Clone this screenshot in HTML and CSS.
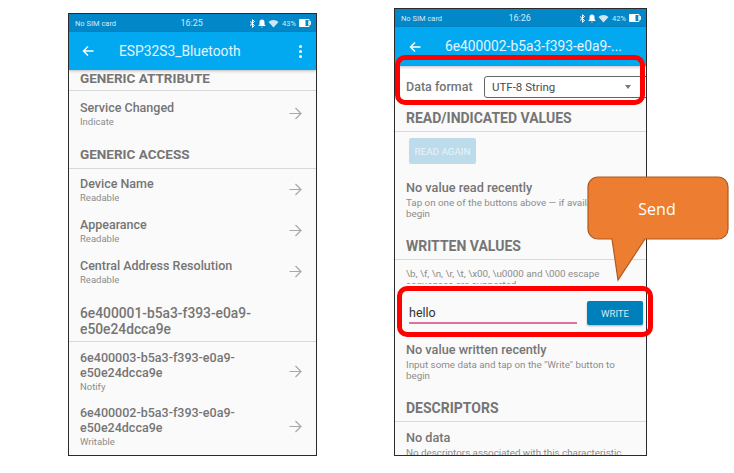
FILE: index.html
```html
<!DOCTYPE html>
<html>
<head>
  <meta charset="UTF-8">
  <title>ESP32S3 Bluetooth</title>
  <link rel="stylesheet" href="styles.css">
</head>
<body>
  <div class="phone phone-left">
    <div class="status">
      <span class="status-sim">No SIM card</span>
      <span class="status-time">16:25</span>
      <span class="status-icons">
        <svg width="7" height="9" viewBox="0 0 7 9"><path d="M1 2.500l4.500 4-2 1.800v-7.600l2 1.800-4.500 4" fill="none" stroke="#fff" stroke-width="1"/></svg>
        <svg width="8" height="9" viewBox="0 0 8 9"><path d="M4 .5c1.800 0 2.500 1.300 2.500 3v2l1 1v.5h-7v-.5l1-1v-2c0-1.700.7-3 2.500-3zM3 7.800h2l-1 1z" fill="#fff"/></svg>
        <svg width="11" height="9" viewBox="0 0 11 9"><path d="M.5 3a7 7 0 0 1 10 0L5.500 8.500z" fill="#cfe6f3"/></svg>
        <span class="status-batt">43%</span>
        <svg width="12" height="8" viewBox="0 0 12 8"><path d="M.5.500h9.500v7H.5zM10 2.500h1.500v3H10z" fill="none" stroke="#fff"/><path d="M1 1h5.500v6H1z" fill="#fff"/></svg>
      </span>
    </div>
    <div class="appbar">
      <svg class="back" width="12" height="12" viewBox="0 0 12 12"><path d="M11.500 6H1.500M6 1.500L1.500 6 6 10.500" fill="none" stroke="#fff" stroke-width="1.500"/></svg>
      <span class="appbar-title">ESP32S3_Bluetooth</span>
      <span class="dots"><i></i><i></i><i></i></span>
    </div>
    <div class="list">
      <h2 class="section section-first">GENERIC ATTRIBUTE</h2>
      <div class="item">
        <div><div class="item-title">Service Changed</div><div class="item-sub">Indicate</div></div>
        <svg class="arrow" width="13" height="13" viewBox="0 0 13 13"><path d="M.5 6.500h11.500M6.500 1l5.500 5.500L6.500 12" fill="none" stroke="#a8a8a8" stroke-width="1.200"/></svg>
      </div>
      <h2 class="section">GENERIC ACCESS</h2>
      <div class="item">
        <div><div class="item-title">Device Name</div><div class="item-sub">Readable</div></div>
        <svg class="arrow" width="13" height="13" viewBox="0 0 13 13"><path d="M.5 6.500h11.500M6.500 1l5.500 5.500L6.500 12" fill="none" stroke="#a8a8a8" stroke-width="1.200"/></svg>
      </div>
      <div class="item">
        <div><div class="item-title">Appearance</div><div class="item-sub">Readable</div></div>
        <svg class="arrow" width="13" height="13" viewBox="0 0 13 13"><path d="M.5 6.500h11.500M6.500 1l5.500 5.500L6.500 12" fill="none" stroke="#a8a8a8" stroke-width="1.200"/></svg>
      </div>
      <div class="item">
        <div><div class="item-title">Central Address Resolution</div><div class="item-sub">Readable</div></div>
        <svg class="arrow" width="13" height="13" viewBox="0 0 13 13"><path d="M.5 6.500h11.500M6.500 1l5.500 5.500L6.500 12" fill="none" stroke="#a8a8a8" stroke-width="1.200"/></svg>
      </div>
      <h2 class="uuid-head">6e400001-b5a3-f393-e0a9-<br>e50e24dcca9e</h2>
      <div class="item item-long">
        <div><div class="item-title">6e400003-b5a3-f393-e0a9-<br>e50e24dcca9e</div><div class="item-sub">Notify</div></div>
        <svg class="arrow" width="13" height="13" viewBox="0 0 13 13"><path d="M.5 6.500h11.500M6.500 1l5.500 5.500L6.500 12" fill="none" stroke="#a8a8a8" stroke-width="1.200"/></svg>
      </div>
      <div class="item item-long">
        <div><div class="item-title">6e400002-b5a3-f393-e0a9-<br>e50e24dcca9e</div><div class="item-sub">Writable</div></div>
        <svg class="arrow" width="13" height="13" viewBox="0 0 13 13"><path d="M.5 6.500h11.500M6.500 1l5.500 5.500L6.500 12" fill="none" stroke="#a8a8a8" stroke-width="1.200"/></svg>
      </div>
    </div>
  </div>

  <div class="phone phone-right">
    <div class="status">
      <span class="status-sim">No SIM card</span>
      <span class="status-time">16:26</span>
      <span class="status-icons">
        <svg width="7" height="9" viewBox="0 0 7 9"><path d="M1 2.500l4.500 4-2 1.800v-7.600l2 1.800-4.500 4" fill="none" stroke="#fff" stroke-width="1"/></svg>
        <svg width="8" height="9" viewBox="0 0 8 9"><path d="M4 .5c1.800 0 2.500 1.300 2.500 3v2l1 1v.5h-7v-.5l1-1v-2c0-1.700.7-3 2.500-3zM3 7.800h2l-1 1z" fill="#fff"/></svg>
        <svg width="11" height="9" viewBox="0 0 11 9"><path d="M.5 3a7 7 0 0 1 10 0L5.500 8.500z" fill="#cfe6f3"/></svg>
        <span class="status-batt">42%</span>
        <svg width="12" height="8" viewBox="0 0 12 8"><path d="M.5.500h9.500v7H.5zM10 2.500h1.500v3H10z" fill="none" stroke="#fff"/><path d="M1 1h5.500v6H1z" fill="#fff"/></svg>
      </span>
    </div>
    <div class="appbar appbar-right">
      <svg class="back" width="12" height="12" viewBox="0 0 12 12"><path d="M11.500 6H1.500M6 1.500L1.500 6 6 10.500" fill="none" stroke="#fff" stroke-width="1.500"/></svg>
      <span class="appbar-title">6e400002-b5a3-f393-e0a9-...</span>
    </div>
    <div class="list">
      <div class="format">
        <span class="format-label">Data format</span>
        <div class="select">UTF-8 String<span class="caret"></span></div>
      </div>
      <h2 class="section section-format">READ/INDICATED VALUES</h2>
      <div class="read-wrap"><span class="read-btn">READ AGAIN</span></div>
      <div class="note note-read">
        <div class="note-title">No value read recently</div>
        <div class="note-text">Tap on one of the buttons above — if available —<br>begin</div>
      </div>
      <h2 class="section section-written">WRITTEN VALUES</h2>
      <div class="escape">\b, \f, \n, \r, \t, \x00, \u0000 and \000 escape<br>sequences are supported</div>
      <div class="write-row">
        <div class="write-input">hello</div>
        <span class="write-btn">WRITE</span>
      </div>
      <div class="note note-written">
        <div class="note-title">No value written recently</div>
        <div class="note-text">Input some data and tap on the "Write" button to<br>begin</div>
      </div>
      <h2 class="section section-desc">DESCRIPTORS</h2>
      <div class="note note-desc">
        <div class="note-title">No data</div>
        <div class="note-text">No descriptors associated with this characteristic</div>
      </div>
    </div>
  </div>

  <div class="mark mark-format"></div>
  <div class="mark mark-write"></div>
  <div class="callout">
    <svg width="144" height="108" viewBox="0 0 144 108"><path d="M11 1h120a10 10 0 0 1 10 10v42a10 10 0 0 1-10 10H58L31 104 25 63H11A10 10 0 0 1 1 53V11A10 10 0 0 1 11 1z" fill="#ed7d31" stroke="#ae5a21" stroke-width="1.200"/></svg>
    <span class="callout-text">Send</span>
  </div>
</body>
</html>
```

FILE: styles.css
```css
* {
  box-sizing: border-box;
}

html,
body {
  height: 100%;
}

body {
  margin: 0;
  position: relative;
  display: flex;
  align-items: flex-start;
  overflow: hidden;
  background-color: #fff;
  font-family: Roboto, sans-serif;
  color: #757575;
}

.phone {
  flex: none;
  overflow: hidden;
  background-color: #fafafa;
  border: 1px solid #2a2a2a;
}

.phone-left {
  width: 249px;
  height: 443px;
  margin: 13px 0 0 68px;
}

.phone-right {
  width: 253px;
  height: 448px;
  margin: 8px 0 0 77px;
}

.status {
  display: flex;
  justify-content: space-between;
  align-items: center;
  height: 18px;
  padding: 0 5px 0 6px;
  background-color: #0288c9;
  color: #d5ebf6;
  font-size: 7.500px;
}

.status-time {
  font-size: 9px;
  margin-left: 18px;
}

.status-icons {
  display: flex;
  align-items: center;
  gap: 2px;
}

.status-batt {
  margin: 0 1px;
}

.appbar {
  display: flex;
  align-items: center;
  height: 38px;
  padding: 0 14px 0 13px;
  background-color: #03a9f0;
  color: #e3f4fd;
  box-shadow: 0 1px 3px rgba(0, 0, 0, 0.25);
  position: relative;
}

.appbar-right {
  height: 39px;
  padding: 0 14px 0 14px;
  align-items: flex-start;
  padding-top: 11px;
}

.appbar-title {
  margin-left: 25px;
  font-size: 13.800px;
  white-space: nowrap;
}

.appbar-right .back {
  margin-top: 3px;
}

.appbar-right .appbar-title {
  margin-left: 24px;
  font-size: 13.800px;
}

.dots {
  display: flex;
  flex-direction: column;
  gap: 2px;
  margin-left: auto;
}

.dots i {
  width: 3px;
  height: 3px;
  border-radius: 50%;
  background-color: #fff;
}

.section {
  margin: 0;
  padding: 0 11px 4px;
  height: 25px;
  display: flex;
  align-items: center;
  border-bottom: 1px solid #d8d8d8;
  font-size: 13.500px;
  font-weight: 700;
  line-height: 16px;
}

.section-first {
  height: 21px;
  padding-bottom: 4px;
}

.item {
  display: flex;
  justify-content: space-between;
  align-items: center;
  height: 41px;
  padding: 0 14px 0 11px;
}

.item:nth-child(2) {
  height: 53px;
  padding-bottom: 8px;
}

.item-title {
  font-size: 12.500px;
  font-weight: 500;
  line-height: 15px;
}

.item-sub {
  font-size: 9.500px;
  line-height: 13px;
  color: #8c8c8c;
}

.item-long {
  height: 55px;
  padding-top: 4px;
}

.uuid-head {
  margin: 0;
  padding: 13px 11px 4px;
  border-bottom: 1px solid #d8d8d8;
  font-size: 13.800px;
  font-weight: 500;
  line-height: 16px;
}

.format {
  display: flex;
  align-items: center;
  height: 37px;
  padding: 4px 0 0 11px;
  background-color: #fff;
}

.format-label {
  width: 78px;
  font-size: 12.500px;
  font-weight: 500;
}

.select {
  display: flex;
  justify-content: space-between;
  align-items: center;
  flex: 1;
  height: 22px;
  margin-right: -4px;
  padding: 0 18px 0 7px;
  border: 1px solid #666;
  border-radius: 3px;
  color: #4a4a4a;
  font-size: 11.500px;
}

.caret {
  width: 0;
  height: 0;
  border-left: 3.500px solid transparent;
  border-right: 3.500px solid transparent;
  border-top: 4px solid #777;
}

.phone-right .section {
  font-size: 14px;
}

.section-format {
  height: 29px;
  padding-top: 2px;
  padding-bottom: 0;
}

.read-wrap {
  padding: 6px 14px 0;
}

.read-btn {
  display: flex;
  justify-content: center;
  align-items: center;
  width: 67px;
  height: 26px;
  border-radius: 2px;
  background-color: #bcdcec;
  color: #e8f3f9;
  font-size: 9.800px;
}

.note {
  padding: 0 11px;
}

.note-read {
  padding-top: 16px;
}

.note-title {
  padding-bottom: 2px;
  font-size: 12.700px;
  font-weight: 500;
  line-height: 15px;
}

.note-text {
  font-size: 9.800px;
  line-height: 11px;
  color: #8c8c8c;
  white-space: nowrap;
}

.section-written {
  height: 27px;
  margin-top: 14px;
  padding-bottom: 1px;
}

.escape {
  height: 24px;
  padding: 8px 11px 0;
  overflow: hidden;
  font-size: 9.800px;
  line-height: 11px;
  color: #8c8c8c;
  white-space: nowrap;
}

.write-row {
  display: flex;
  justify-content: space-between;
  align-items: flex-start;
  height: 48px;
  padding: 17px 3px 0 14px;
}

.write-input {
  width: 168px;
  height: 22px;
  margin-top: 1px;
  border-bottom: 2px solid #e0709c;
  color: #333;
  font-size: 12.500px;
  line-height: 22px;
}

.write-btn {
  display: flex;
  justify-content: center;
  align-items: center;
  width: 56px;
  height: 24px;
  border-radius: 2px;
  background-color: #0080bb;
  color: #d8ecf6;
  font-size: 9.500px;
  box-shadow: 0 1px 2px rgba(0, 0, 0, 0.3);
}

.note-written {
  padding-top: 10px;
}

.section-desc {
  height: 27px;
  margin-top: 14px;
  padding-bottom: 1px;
}

.note-desc {
  padding-top: 8px;
}

.mark {
  position: absolute;
  border: 5px solid #f00;
  border-radius: 10px;
}

.mark-format {
  left: 395px;
  top: 55px;
  width: 250px;
  height: 50px;
}

.mark-write {
  left: 397px;
  top: 286px;
  width: 256px;
  height: 51px;
}

.callout {
  position: absolute;
  left: 587px;
  top: 176px;
}

.callout svg {
  display: block;
}

.callout-text {
  position: absolute;
  left: 0;
  right: 0;
  top: 22px;
  padding-right: 4px;
  text-align: center;
  color: #fff;
  font-family: "Open Sans", sans-serif;
  font-size: 16px;
  line-height: 22px;
}
```
